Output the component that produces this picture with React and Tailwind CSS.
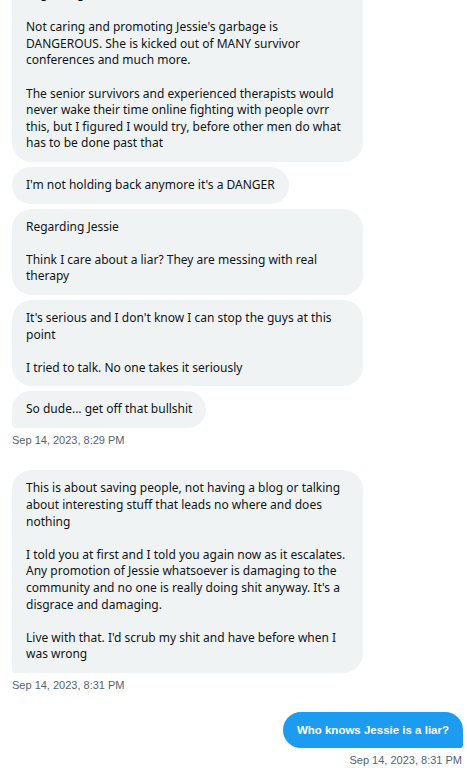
const received = [
  {
    text: "Regarding Jessie\n\nNot caring and promoting Jessie's garbage is DANGEROUS. She is kicked out of MANY survivor conferences and much more.\n\nThe senior survivors and experienced therapists would never wake their time online fighting with people ovrr this, but I figured I would try, before other men do what has to be done past that",
  },
  { text: "I'm not holding back anymore it's a DANGER" },
  { text: "Regarding Jessie\n\nThink I care about a liar? They are messing with real therapy" },
  { text: "It's serious and I don't know I can stop the guys at this point\n\nI tried to talk. No one takes it seriously" },
  { text: "So dude... get off that bullshit", last: true },
];

const second = [
  {
    text: "This is about saving people, not having a blog or talking about interesting stuff that leads no where and does nothing\n\nI told you at first and I told you again now as it escalates. Any promotion of Jessie whatsoever is damaging to the community and no one is really doing shit anyway. It's a disgrace and damaging.\n\nLive with that. I'd scrub my shit and have before when I was wrong",
    last: true,
  },
];

function Bubble({ text, last }) {
  return (
    <div
      className={`max-w-[351px] self-start bg-[#eff3f4] text-[#0f1419] px-[14px] py-[10px] text-[12px] leading-[16.6px] whitespace-pre-line rounded-[20px] ${
        last ? 'rounded-bl-[4px]' : ''
      }`}
      style={{ fontFamily: '"Noto Sans", sans-serif' }}
    >
      {text}
    </div>
  );
}

function Stamp({ children, right }) {
  return (
    <div
      className={`text-[11px] text-[#536471] mt-[4px] ${right ? 'self-end pr-[1px]' : 'self-start'}`}
      style={{ fontFamily: '"Liberation Sans", Arial, sans-serif' }}
    >
      {children}
    </div>
  );
}

export default function App() {
  return (
    <div className="w-[467px] h-[768px] overflow-hidden bg-white">
      <div className="-mt-[24px] pl-[12px] pr-[4px] flex flex-col">
        <div className="flex flex-col gap-[5px]">
          {received.map((m, i) => (
            <Bubble key={i} {...m} />
          ))}
        </div>
        <Stamp>Sep 14, 2023, 8:29 PM</Stamp>

        <div className="flex flex-col gap-[5px] mt-[22px]">
          {second.map((m, i) => (
            <Bubble key={i} {...m} />
          ))}
        </div>
        <Stamp>Sep 14, 2023, 8:31 PM</Stamp>

        <div className="self-end mt-[19px] bg-[#1d9bf0] text-white rounded-[20px] rounded-br-[4px] px-[14px] py-[10px] text-[11.5px] leading-[16px] font-bold"
          style={{ fontFamily: '"Liberation Sans", Arial, sans-serif' }}
        >
          Who knows Jessie is a liar?
        </div>
        <Stamp right>Sep 14, 2023, 8:31 PM</Stamp>
      </div>
    </div>
  );
}
